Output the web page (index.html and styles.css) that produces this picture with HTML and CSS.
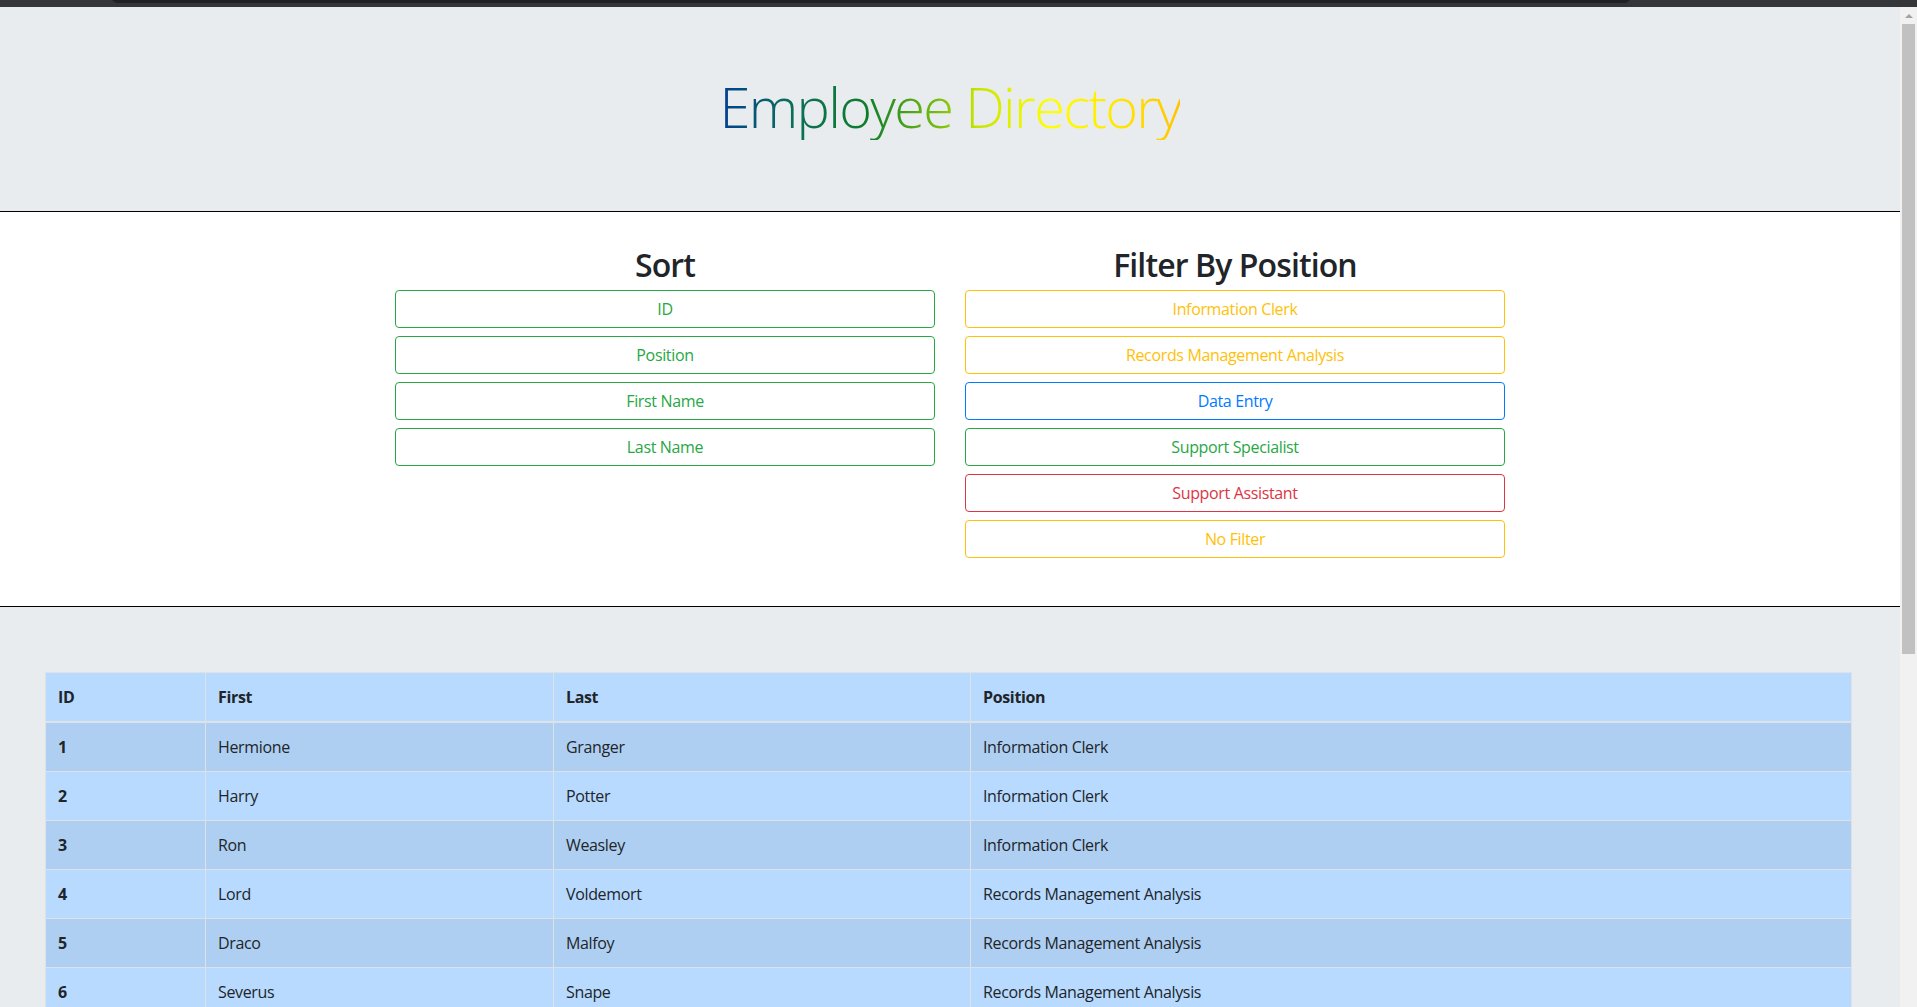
FILE: index.html
```html
<!DOCTYPE html>
<html lang="en">
<head>
<meta charset="utf-8">
<title>Employee Directory</title>
<link rel="stylesheet" href="styles.css">
</head>
<body>
<div class="chrome-bar"><div class="chrome-tab"></div></div>
<div class="window">
  <main class="page">
    <header class="hero">
      <h1 class="title"><span class="title-text">Employee Directory</span></h1>
    </header>
    <section class="controls">
      <div class="controls-inner">
        <div class="col">
          <h2 class="col-title">Sort</h2>
          <button class="btn btn-success">ID</button>
          <button class="btn btn-success">Position</button>
          <button class="btn btn-success">First Name</button>
          <button class="btn btn-success">Last Name</button>
        </div>
        <div class="col">
          <h2 class="col-title">Filter By Position</h2>
          <button class="btn btn-warning">Information Clerk</button>
          <button class="btn btn-warning">Records Management Analysis</button>
          <button class="btn btn-primary">Data Entry</button>
          <button class="btn btn-success">Support Specialist</button>
          <button class="btn btn-danger">Support Assistant</button>
          <button class="btn btn-warning">No Filter</button>
        </div>
      </div>
    </section>
    <section class="results">
      <table class="emp-table">
        <colgroup>
          <col class="c-id"><col class="c-first"><col class="c-last"><col class="c-pos">
        </colgroup>
        <thead>
          <tr><th>ID</th><th>First</th><th>Last</th><th>Position</th></tr>
        </thead>
        <tbody>
          <tr><th>1</th><td>Hermione</td><td>Granger</td><td>Information Clerk</td></tr>
          <tr><th>2</th><td>Harry</td><td>Potter</td><td>Information Clerk</td></tr>
          <tr><th>3</th><td>Ron</td><td>Weasley</td><td>Information Clerk</td></tr>
          <tr><th>4</th><td>Lord</td><td>Voldemort</td><td>Records Management Analysis</td></tr>
          <tr><th>5</th><td>Draco</td><td>Malfoy</td><td>Records Management Analysis</td></tr>
          <tr><th>6</th><td>Severus</td><td>Snape</td><td>Records Management Analysis</td></tr>
        </tbody>
      </table>
    </section>
  </main>
  <aside class="scrollbar">
    <div class="scroll-arrow"></div>
    <div class="scroll-thumb"></div>
  </aside>
</div>
</body>
</html>
```

FILE: styles.css
```css
* { box-sizing: border-box; }
html, body { margin: 0; height: 100%; }
body {
  font-family: "Segoe UI", "Open Sans", "Noto Sans", sans-serif;
  font-size: 16px;
  line-height: 1.5;
  letter-spacing: -0.35px;
  color: #212529;
  background: #e9ecef;
  overflow: hidden;
  display: flex;
  flex-direction: column;
}
.chrome-bar {
  height: 7px;
  flex-shrink: 0;
  background: #35363a;
  display: flex;
}
.chrome-tab {
  margin-left: 112px;
  width: 1518px;
  height: 3px;
  background: #202124;
  clip-path: polygon(0 0, 100% 0, calc(100% - 4px) 100%, 4px 100%);
}
.window { flex: 1; display: flex; min-height: 0; }
.page { flex: 1; min-width: 0; overflow: hidden; background: #e9ecef; }
.scrollbar {
  width: 17px;
  flex-shrink: 0;
  background: #f1f1f1;
  display: flex;
  flex-direction: column;
  align-items: center;
}
.scroll-arrow {
  height: 17px;
  width: 100%;
  display: flex;
  align-items: center;
  justify-content: center;
}
.scroll-arrow::before {
  content: "";
  border-left: 4px solid transparent;
  border-right: 4px solid transparent;
  border-bottom: 4px solid #a3a3a3;
}
.scroll-thumb { width: 13px; height: 630px; background: #c1c1c1; }

.hero {
  background: #e9ecef;
  padding: 66px 0 63px;
  border-bottom: 1px solid #000;
  text-align: center;
}
.title {
  margin: 0 0 8px;
  font-size: 56px;
  font-weight: 300;
  line-height: 1.2;
  letter-spacing: -1.7px;
}
.title-text {
  display: inline-block;
  background: linear-gradient(to right, #003f8f 0%, #0b6e5a 15%, #0d7d2a 32%, #7cc010 48%, #c8e400 56%, #ffff00 72%, #ffe800 86%, #ffc400 100%);
  -webkit-background-clip: text;
  background-clip: text;
  color: transparent;
}

.controls {
  background: #fff;
  border-bottom: 1px solid #000;
  padding: 36px 0 48px;
}
.controls-inner {
  width: 1140px;
  margin: 0 auto;
  padding: 0 15px;
  display: grid;
  grid-template-columns: 1fr 1fr;
  column-gap: 30px;
  align-items: start;
}
.col { display: flex; flex-direction: column; gap: 8px; }
.col-title {
  margin: 0;
  text-align: center;
  font-size: 32px;
  font-weight: 600;
  line-height: 34px;
  letter-spacing: -0.9px;
  color: #212529;
}
.btn {
  display: block;
  width: 100%;
  height: 38px;
  padding: 6px 12px;
  font-family: inherit;
  font-size: 16px;
  line-height: 24px;
  letter-spacing: inherit;
  background: transparent;
  border: 1px solid;
  border-radius: 4px;
  text-align: center;
  cursor: pointer;
}
.btn-success { color: #28a745; border-color: #28a745; }
.btn-warning { color: #ffc107; border-color: #ffc107; }
.btn-primary { color: #007bff; border-color: #007bff; }
.btn-danger { color: #dc3545; border-color: #dc3545; }

.results { padding: 65px 48px 0 45px; }
.emp-table {
  width: 100%;
  border-collapse: collapse;
  table-layout: fixed;
}
.c-id { width: 160px; }
.c-first { width: 348px; }
.c-last { width: 417px; }
.emp-table th, .emp-table td {
  padding: 12px;
  border: 1px solid #dee2e6;
  text-align: left;
  vertical-align: top;
}
.emp-table th { font-weight: 700; }
.emp-table thead th { border-bottom-width: 2px; background: #b8daff; }
.emp-table tbody tr { background: #b8daff; }
.emp-table tbody tr:nth-child(odd) { background: #afcff2; }
```
